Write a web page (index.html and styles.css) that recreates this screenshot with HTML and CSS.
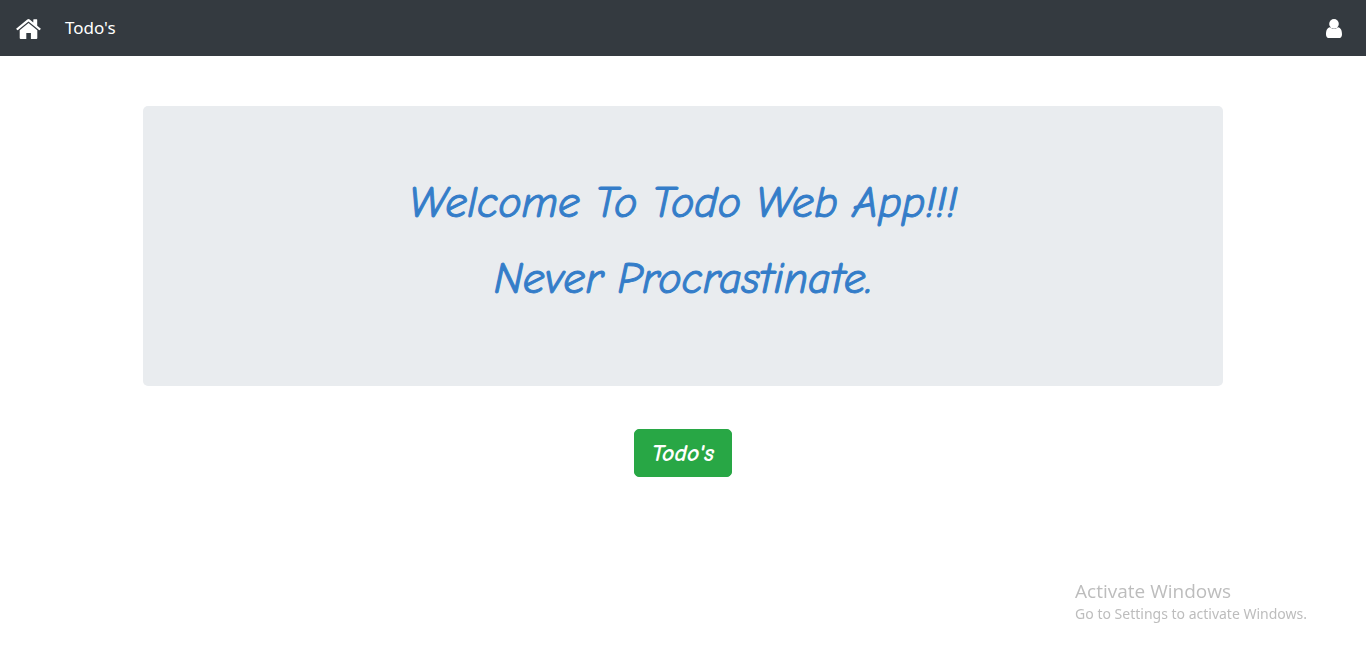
FILE: index.html
```html
<!DOCTYPE html>
<html lang="en">
<head>
<meta charset="utf-8">
<meta name="viewport" content="width=device-width, initial-scale=1">
<title>Todo Web App</title>
<link rel="stylesheet" href="styles.css">
</head>
<body>
<nav class="navbar">
  <a class="nav-icon" href="#" aria-label="Home">
    <svg width="25" height="22" viewBox="0 0 25 22" fill="currentColor" aria-hidden="true">
      <path d="M12.5 6 21.3 13.3V20.9Q21.3 21.9 20.3 21.9H14.9V15.9H10.3V21.9H4.7Q3.7 21.9 3.7 20.9V13.3Z"/>
      <path d="M.1 11.8 11.3 2.5Q12.5 1.6 13.7 2.5L17.3 5.5V2.7Q17.3 2.2 17.8 2.2H20.7Q21.2 2.2 21.2 2.7V8.7L24.9 11.8 23.9 13.1Q23.5 13.4 23 13.1L12.5 4.5 2 13.1Q1.5 13.4 1.1 13.1Z"/>
    </svg>
  </a>
  <a class="nav-link" href="#">Todo's</a>
  <a class="nav-icon nav-user" href="#" aria-label="Account">
    <svg width="16" height="20" viewBox="0 0 16 20" fill="currentColor" aria-hidden="true">
      <circle cx="8" cy="5.9" r="4.8"/>
      <path d="M4 9.2Q8 12.6 12 9.2C14.8 9.5 16 12.6 16 16.4 16 18.8 14.6 20 12.8 20H3.2C1.4 20 0 18.8 0 16.4 0 12.6 1.2 9.5 4 9.2Z"/>
    </svg>
  </a>
</nav>
<main class="container">
  <section class="jumbotron">
    <h1 class="headline">Welcome To Todo Web App!!!</h1>
    <p class="headline tagline">Never Procrastinate.</p>
  </section>
  <button class="todo-button" type="button">Todo's</button>
</main>
<aside class="watermark">
  <p class="watermark-title">Activate Windows</p>
  <p class="watermark-text">Go to Settings to activate Windows.</p>
</aside>
</body>
</html>
```
FILE: styles.css
```css
* {
  box-sizing: border-box;
}

body {
  margin: 0;
  background: #fff;
  font-family: "Noto Sans", sans-serif;
}

.navbar {
  display: flex;
  align-items: center;
  height: 56px;
  padding: 0 24px 0 16px;
  background: #343a40;
}

.nav-icon {
  display: flex;
  color: #fff;
}

.nav-icon svg {
  display: block;
}

.nav-link {
  margin-left: 24px;
  color: #fff;
  font-size: 17px;
  line-height: 24px;
  text-decoration: none;
}

.nav-user {
  margin-left: auto;
}

.container {
  display: flex;
  flex-direction: column;
  align-items: center;
  max-width: 1110px;
  margin: 50px auto 0;
  padding: 0 15px;
}

.jumbotron {
  width: 100%;
  padding: 65px 32px 75px;
  border-radius: 5px;
  background: #e9ecef;
  text-align: center;
}

.headline {
  margin: 0;
  color: #347dc9;
  font-family: "Comic Sans MS", "Comic Neue", Lato, sans-serif;
  font-size: 44px;
  font-style: italic;
  font-weight: 500;
  line-height: 64px;
  -webkit-text-stroke: 1px #347dc9;
}

.tagline {
  margin-top: 12px;
}

.todo-button {
  margin-top: 43px;
  padding: 8px 17px;
  border: 1px solid #28a745;
  border-radius: 5px;
  background: #28a745;
  color: #fff;
  font-family: "Comic Sans MS", "Comic Neue", Lato, sans-serif;
  font-size: 24px;
  font-style: italic;
  font-weight: 600;
  line-height: 30px;
}

.watermark {
  position: fixed;
  right: 59px;
  bottom: 32px;
  color: #bdbdbd;
  font-family: "Segoe UI", "Open Sans", sans-serif;
}

.watermark p {
  margin: 0;
}

.watermark-title {
  font-size: 19px;
  line-height: 26px;
}

.watermark-text {
  font-family: "Segoe UI", "Noto Sans", sans-serif;
  font-size: 14px;
  line-height: 20px;
}
```
